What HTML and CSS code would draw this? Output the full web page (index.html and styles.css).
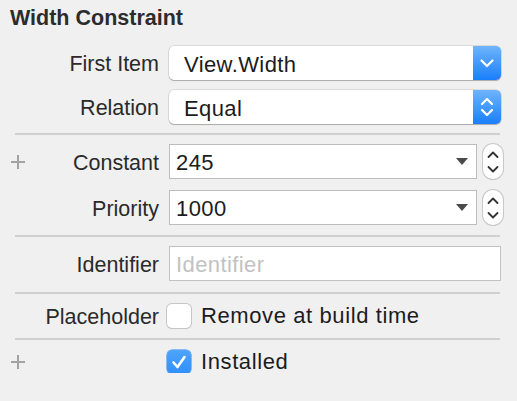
FILE: index.html
```html
<!DOCTYPE html>
<html>
<head>
<meta charset="utf-8">
<link rel="stylesheet" href="styles.css">
</head>
<body>
<div class="panel">
  <div class="title">Width Constraint</div>

  <div class="group g1">
    <div class="row">
      <div class="label"><span class="ltext">First Item</span></div>
      <div class="popup">
        <span class="pv">View.Width</span>
        <span class="pbtn">
          <svg width="28" height="34" viewBox="0 0 28 34"><path d="M8.5 14.5 L14 20 L19.5 14.5" fill="none" stroke="#fff" stroke-width="2.2" stroke-linecap="round" stroke-linejoin="round"/></svg>
        </span>
      </div>
    </div>
    <div class="row">
      <div class="label"><span class="ltext">Relation</span></div>
      <div class="popup">
        <span class="pv">Equal</span>
        <span class="pbtn">
          <svg width="28" height="34" viewBox="0 0 28 34"><path d="M9 14 L14 9 L19 14 M9 20 L14 25 L19 20" fill="none" stroke="#fff" stroke-width="2.2" stroke-linecap="round" stroke-linejoin="round"/></svg>
        </span>
      </div>
    </div>
  </div>

  <div class="sep s1"></div>

  <div class="group g2">
    <div class="row r35">
      <div class="label">
        <svg class="plus" width="14" height="14" viewBox="0 0 14 14"><rect x="0" y="6" width="14" height="2" fill="#a3a3a3"/><rect x="6" y="0" width="2" height="14" fill="#a3a3a3"/></svg>
        <span class="ltext">Constant</span>
      </div>
      <div class="ctl">
        <div class="combo">
          <span class="cv">245</span>
          <svg class="tri" width="12" height="7" viewBox="0 0 12 7"><path d="M0 0 H12 L6 7 Z" fill="#4a4a4a"/></svg>
        </div>
        <div class="stepper">
          <svg width="20" height="35" viewBox="0 0 20 35"><path d="M5.5 13 L10 8.5 L14.5 13 M5.5 23 L10 27.5 L14.5 23" fill="none" stroke="#333" stroke-width="1.8" stroke-linecap="round" stroke-linejoin="round"/></svg>
        </div>
      </div>
    </div>
    <div class="row r35">
      <div class="label"><span class="ltext">Priority</span></div>
      <div class="ctl">
        <div class="combo">
          <span class="cv">1000</span>
          <svg class="tri" width="12" height="7" viewBox="0 0 12 7"><path d="M0 0 H12 L6 7 Z" fill="#4a4a4a"/></svg>
        </div>
        <div class="stepper">
          <svg width="20" height="35" viewBox="0 0 20 35"><path d="M5.5 13 L10 8.5 L14.5 13 M5.5 23 L10 27.5 L14.5 23" fill="none" stroke="#333" stroke-width="1.8" stroke-linecap="round" stroke-linejoin="round"/></svg>
        </div>
      </div>
    </div>
  </div>

  <div class="sep s2"></div>

  <div class="row r35 idrow">
    <div class="label"><span class="ltext">Identifier</span></div>
    <div class="field"><span class="ph">Identifier</span></div>
  </div>

  <div class="sep s3"></div>

  <div class="row cbrow">
    <div class="label"><span class="ltext">Placeholder</span></div>
    <div class="check">
      <span class="box"></span>
      <span class="ctext">Remove at build time</span>
    </div>
  </div>

  <div class="sep s4"></div>

  <div class="row instrow">
    <div class="label">
      <svg class="plus" width="14" height="14" viewBox="0 0 14 14"><rect x="0" y="6" width="14" height="2" fill="#a3a3a3"/><rect x="6" y="0" width="2" height="14" fill="#a3a3a3"/></svg>
    </div>
    <div class="check">
      <span class="box on">
        <svg width="24" height="24" viewBox="0 0 24 24"><path d="M6.5 12.5 L10.5 17 L17.5 7" fill="none" stroke="#fff" stroke-width="2.6" stroke-linecap="round" stroke-linejoin="round"/></svg>
      </span>
      <span class="ctext">Installed</span>
    </div>
  </div>
</div>
</body>
</html>
```

FILE: styles.css
```css
html, body {
  margin: 0;
  padding: 0;
  background: #f0f0f0;
}
body {
  font-family: "Liberation Sans", Arial, sans-serif;
  font-size: 21.5px;
  color: #262626;
}
.panel {
  width: 501px;
  padding-top: 6px;
  display: flex;
  flex-direction: column;
}
.title {
  margin-left: 10px;
  height: 24px;
  line-height: 24px;
  font-weight: bold;
  color: #2c2c2c;
}
.group {
  display: flex;
  flex-direction: column;
}
.g1 {
  margin-top: 16px;
  gap: 10px;
}
.g2 {
  gap: 11px;
}
.row {
  display: grid;
  grid-template-columns: 159px 1fr;
  column-gap: 10px;
  height: 34px;
  align-items: center;
}
.r35 {
  height: 35px;
}
.label {
  display: flex;
  align-items: center;
  justify-content: flex-end;
  height: 100%;
  position: relative;
  color: #2a2a2a;
}
.plus {
  position: absolute;
  left: 11px;
  top: 50%;
  margin-top: -7px;
}
.ltext {
  white-space: nowrap;
  padding-top: 3px;
}
.popup {
  height: 34px;
  box-sizing: border-box;
  display: flex;
  align-items: center;
  background: #fff;
  border-radius: 5px;
  box-shadow: 0 0 0 0.5px rgba(0,0,0,0.18), 0 1px 1px rgba(0,0,0,0.22);
  overflow: hidden;
}
.pv {
  flex: 1;
  padding-left: 15px;
  padding-top: 3px;
  color: #1c1c1c;
  font-size: 22px;
  letter-spacing: 0.4px;
}
.pbtn {
  width: 28px;
  height: 34px;
  background: linear-gradient(#6fb4fb, #1a7ffb);
  display: flex;
}
.sep {
  height: 2px;
  background: #d0d0d0;
  margin-left: 15px;
  width: 485px;
}
.s1 {
  margin-top: 9px;
  margin-bottom: 9px;
}
.s2 {
  margin-top: 10px;
  margin-bottom: 9px;
}
.s3 {
  margin-top: 11px;
}
.s4 {
  margin-top: 0;
}
.ctl {
  display: flex;
  align-items: center;
  gap: 6px;
  height: 35px;
}
.combo {
  width: 308px;
  height: 35px;
  box-sizing: border-box;
  border: 1px solid #bdbdbd;
  background: #fff;
  display: flex;
  align-items: center;
  padding: 0 8px 0 6px;
}
.cv {
  flex: 1;
  padding-top: 3px;
  color: #1c1c1c;
  font-size: 22px;
  letter-spacing: 0.4px;
}
.stepper {
  width: 20px;
  height: 35px;
  box-sizing: border-box;
  border-radius: 10px;
  background: #fff;
  box-shadow: 0 0 0 1px #c9c9c9, 0 1px 1px rgba(0,0,0,0.15);
  display: flex;
  align-items: center;
  justify-content: center;
  overflow: hidden;
}
.stepper svg {
  flex: none;
}
.field {
  height: 35px;
  box-sizing: border-box;
  border: 1px solid #c3c3c3;
  background: #fff;
  display: flex;
  align-items: center;
  padding-left: 6px;
}
.ph {
  color: #c2c2c2;
  font-size: 22px;
  padding-top: 3px;
  letter-spacing: 0.4px;
}
.cbrow {
  height: 44px;
}
.instrow {
  height: 24px;
  margin-top: 9px;
}
.check {
  display: flex;
  align-items: center;
  margin-left: -2px;
  gap: 10px;
}
.box {
  width: 24px;
  height: 24px;
  box-sizing: border-box;
  border-radius: 5px;
  background: #fff;
  box-shadow: 0 0 0 1px #c6c6c6, 0 1px 1px rgba(0,0,0,0.12);
  display: flex;
}
.box.on {
  background: linear-gradient(#4ea4fc, #2f8ffb);
  box-shadow: 0 0 0 0.5px #2b86f0;
}
.ctext {
  color: #1c1c1c;
  font-size: 22px;
  letter-spacing: 0.6px;
}
```
